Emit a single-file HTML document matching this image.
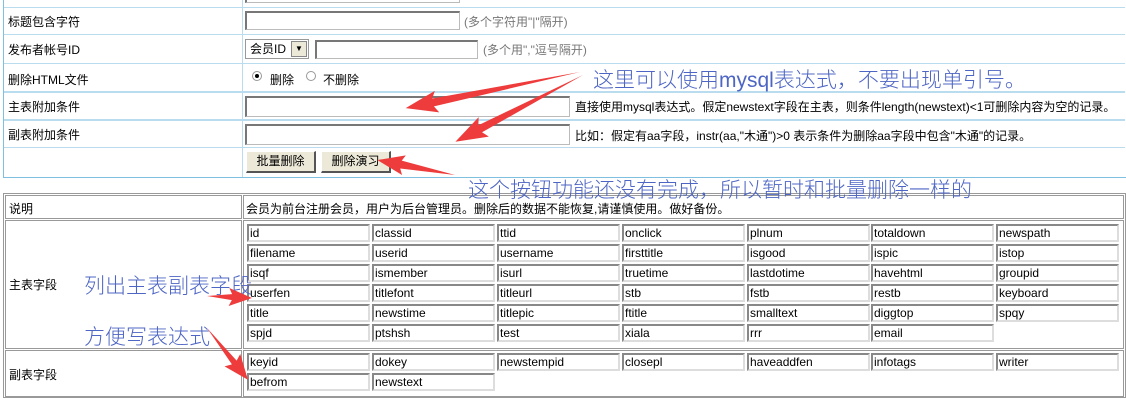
<!DOCTYPE html>
<html><head><meta charset="utf-8"><style>
body{margin:0;width:1126px;height:400px;background:#fff;position:relative;overflow:hidden;font-family:"Liberation Sans","Noto Sans CJK SC",sans-serif;font-size:12px;color:#000}
.a{position:absolute}
.hl{position:absolute;height:1px;background:#b9dcef}
.inp{position:absolute;height:19px;border:1px solid #bbb;border-top:2px solid #777;border-left:2px solid #777;background:#fff;box-sizing:border-box}
.btn{position:absolute;height:22px;background:#ece9d8;border:1px solid #fff;border-right:2px solid #555;border-bottom:2px solid #555;box-sizing:border-box;text-align:center;line-height:19px}
.g{position:absolute;border:1px solid #999}
.c{position:absolute;width:123px;height:18px;border:2px solid #888;border-right-color:#ddd;border-bottom-color:#ddd;box-sizing:border-box;line-height:14px;padding-left:1px;font-size:12px;background:#fff}
.note{position:absolute;color:#4d65c4;font-size:21px;white-space:nowrap;font-weight:300}
.gray{color:#777}
</style></head><body>
<div class="a" style="left:3px;top:-2px;width:1122px;height:179px;border:1px solid #7fbfe0;border-top:none"></div>
<div class="hl" style="left:4px;top:7px;width:1121px"></div>
<div class="hl" style="left:4px;top:34px;width:1121px"></div>
<div class="hl" style="left:4px;top:63px;width:1121px"></div>
<div class="hl" style="left:4px;top:91px;width:1121px;height:2px"></div>
<div class="hl" style="left:4px;top:119px;width:1121px;height:2px"></div>
<div class="hl" style="left:4px;top:147px;width:1121px"></div>
<div class="a" style="left:242px;top:0;width:1px;height:177px;background:#b9dcef"></div>
<div class="a" style="left:8px;top:13px">标题包含字符</div>
<div class="a" style="left:8px;top:41px">发布者帐号ID</div>
<div class="a" style="left:8px;top:71px">删除HTML文件</div>
<div class="a" style="left:8px;top:98px">主表附加条件</div>
<div class="a" style="left:8px;top:126px">副表附加条件</div>
<div class="inp" style="left:245px;top:-16px;width:215px"></div>
<div class="inp" style="left:245px;top:11px;width:215px"></div>
<div class="a gray" style="left:464px;top:13px">(多个字符用"|"隔开)</div>
<div class="a" style="left:245px;top:39px;width:64px;height:20px;border:1px solid #999;box-sizing:border-box;background:#fff;padding-left:4px;line-height:18px">会员ID</div>
<div class="a" style="left:291px;top:41px;width:16px;height:16px;background:#ece9d8;border:1px solid #888;box-sizing:border-box;font-size:8px;text-align:center;line-height:14px">▼</div>
<div class="inp" style="left:315px;top:40px;width:163px"></div>
<div class="a gray" style="left:483px;top:41px">(多个用","逗号隔开)</div>
<div class="a" style="left:252px;top:71px;width:10px;height:10px;border-radius:50%;border:1px solid #999;box-sizing:border-box"><div class="a" style="left:2px;top:2px;width:4px;height:4px;background:#000;border-radius:50%"></div></div>
<div class="a" style="left:270px;top:71px">删除</div>
<div class="a" style="left:306px;top:71px;width:10px;height:10px;border-radius:50%;border:1px solid #999;box-sizing:border-box"></div>
<div class="a" style="left:323px;top:71px">不删除</div>
<div class="inp" style="left:245px;top:96px;width:325px;height:21px"></div>
<div class="a" style="left:575px;top:98px">直接使用mysql表达式。假定newstext字段在主表，则条件length(newstext)&lt;1可删除内容为空的记录。</div>
<div class="inp" style="left:245px;top:124px;width:325px;height:21px"></div>
<div class="a" style="left:575px;top:127px">比如：假定有aa字段，instr(aa,"木通")&gt;0 表示条件为删除aa字段中包含"木通"的记录。</div>
<div class="btn" style="left:246px;top:151px;width:70px">批量删除</div>
<div class="btn" style="left:321px;top:151px;width:70px">删除演习</div>
<div class="g" style="left:3px;top:193px;width:1121px;height:203px;border-width:1px"></div>
<div class="g" style="left:5px;top:195px;width:235px;height:22px"></div>
<div class="g" style="left:243px;top:195px;width:879px;height:22px"></div>
<div class="g" style="left:5px;top:220px;width:235px;height:127px"></div>
<div class="g" style="left:243px;top:220px;width:879px;height:127px"></div>
<div class="g" style="left:5px;top:350px;width:235px;height:45px"></div>
<div class="g" style="left:243px;top:350px;width:879px;height:45px"></div>
<div class="a" style="left:9px;top:200px">说明</div>
<div class="a" style="left:246px;top:200px">会员为前台注册会员，用户为后台管理员。删除后的数据不能恢复,请谨慎使用。做好备份。</div>
<div class="a" style="left:9px;top:276px">主表字段</div>
<div class="a" style="left:9px;top:366px">副表字段</div>
<div class="c" style="left:247px;top:224px">id</div><div class="c" style="left:372px;top:224px">classid</div><div class="c" style="left:497px;top:224px">ttid</div><div class="c" style="left:622px;top:224px">onclick</div><div class="c" style="left:747px;top:224px">plnum</div><div class="c" style="left:871px;top:224px">totaldown</div><div class="c" style="left:996px;top:224px">newspath</div>
<div class="c" style="left:247px;top:244px">filename</div><div class="c" style="left:372px;top:244px">userid</div><div class="c" style="left:497px;top:244px">username</div><div class="c" style="left:622px;top:244px">firsttitle</div><div class="c" style="left:747px;top:244px">isgood</div><div class="c" style="left:871px;top:244px">ispic</div><div class="c" style="left:996px;top:244px">istop</div>
<div class="c" style="left:247px;top:264px">isqf</div><div class="c" style="left:372px;top:264px">ismember</div><div class="c" style="left:497px;top:264px">isurl</div><div class="c" style="left:622px;top:264px">truetime</div><div class="c" style="left:747px;top:264px">lastdotime</div><div class="c" style="left:871px;top:264px">havehtml</div><div class="c" style="left:996px;top:264px">groupid</div>
<div class="c" style="left:247px;top:284px">userfen</div><div class="c" style="left:372px;top:284px">titlefont</div><div class="c" style="left:497px;top:284px">titleurl</div><div class="c" style="left:622px;top:284px">stb</div><div class="c" style="left:747px;top:284px">fstb</div><div class="c" style="left:871px;top:284px">restb</div><div class="c" style="left:996px;top:284px">keyboard</div>
<div class="c" style="left:247px;top:304px">title</div><div class="c" style="left:372px;top:304px">newstime</div><div class="c" style="left:497px;top:304px">titlepic</div><div class="c" style="left:622px;top:304px">ftitle</div><div class="c" style="left:747px;top:304px">smalltext</div><div class="c" style="left:871px;top:304px">diggtop</div><div class="c" style="left:996px;top:304px">spqy</div>
<div class="c" style="left:247px;top:324px">spjd</div><div class="c" style="left:372px;top:324px">ptshsh</div><div class="c" style="left:497px;top:324px">test</div><div class="c" style="left:622px;top:324px">xiala</div><div class="c" style="left:747px;top:324px">rrr</div><div class="c" style="left:871px;top:324px">email</div>
<div class="c" style="left:247px;top:353px">keyid</div><div class="c" style="left:372px;top:353px">dokey</div><div class="c" style="left:497px;top:353px">newstempid</div><div class="c" style="left:622px;top:353px">closepl</div><div class="c" style="left:747px;top:353px">haveaddfen</div><div class="c" style="left:871px;top:353px">infotags</div><div class="c" style="left:996px;top:353px">writer</div>
<div class="c" style="left:247px;top:373px">befrom</div><div class="c" style="left:372px;top:373px">newstext</div>
<div class="note" style="left:593px;top:64px">这里可以使用<b>mysql</b>表达式，不要出现单引号。</div>
<div class="note" style="left:468px;top:174px">这个按钮功能还没有完成，所以暂时和批量删除一样的</div>
<div class="note" style="left:84px;top:270px">列出主表副表字段</div>
<div class="note" style="left:84px;top:321px">方便写表达式</div>
<svg class="a" style="left:0;top:0" width="1126" height="400">
<g fill="#ee3b3b">
<g transform="translate(580,72) rotate(168.3)"><polygon points="0,0 150,-4 146,-11 178,0 146,11 150,4"/></g>
<g transform="translate(583,75) rotate(152.4)"><polygon points="0,0 116,-4 112,-11 144,0 112,11 116,4"/></g>
<g transform="translate(455,175) rotate(190.9)"><polygon points="0,0 55,-4 52,-10 79,0 52,10 55,4"/></g>
<g transform="translate(207,296) rotate(2.5)"><polygon points="0,0 25,-3 22,-9 45,0 22,9 25,3"/></g>
<g transform="translate(207,328) rotate(51.7)"><polygon points="0,0 44,-3 41,-10 66,0 41,10 44,3"/></g>
</g>
</svg>
</body></html>
